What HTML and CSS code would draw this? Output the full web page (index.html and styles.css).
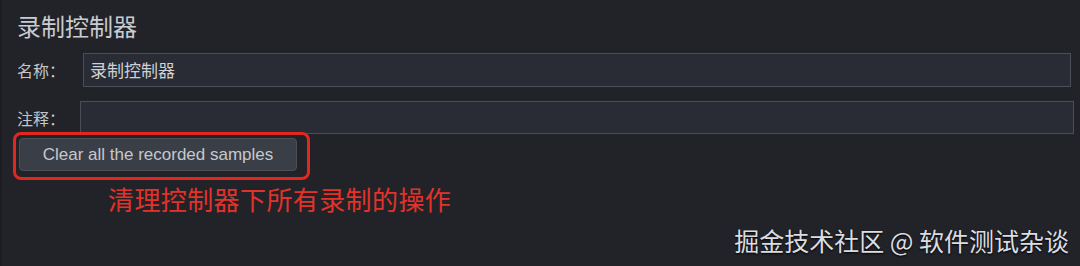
FILE: index.html
```html
<!DOCTYPE html>
<html lang="zh">
<head>
<meta charset="utf-8">
<title>录制控制器</title>
<link rel="stylesheet" href="styles.css">
</head>
<body>
<div class="panel">
  <h1 class="title">录制控制器</h1>
  <div class="row row-name">
    <label class="label">名称：</label>
    <div class="field">录制控制器</div>
  </div>
  <div class="row row-comment">
    <label class="label">注释：</label>
    <div class="field"></div>
  </div>
  <div class="btn-row">
    <div class="btn-wrap">
      <button class="btn">Clear all the recorded samples</button>
      <span class="highlight"></span>
    </div>
  </div>
  <p class="note">清理控制器下所有录制的操作</p>
  <div class="footer">
    <span class="watermark">掘金技术社区 @ 软件测试杂谈</span>
  </div>
</div>
</body>
</html>
```

FILE: styles.css
```css
html, body {
  margin: 0;
  padding: 0;
  background: #212329;
}
body {
  width: 1080px;
  height: 266px;
  overflow: hidden;
  font-family: "Liberation Sans", "Noto Sans CJK SC", sans-serif;
}
.panel {
  box-sizing: border-box;
  height: 266px;
  padding: 11px 0 0 17px;
  border-left: 2px solid #1b1d22;
  display: flex;
  flex-direction: column;
}
.title {
  margin: 0 0 0 -2px;
  font-family: "Noto Sans CJK SC", sans-serif;
  font-weight: 400;
  font-size: 24px;
  line-height: 30px;
  color: #c9cbcf;
}
.row {
  display: flex;
  align-items: center;
}
.row-name {
  margin-top: 12px;
}
.row-comment {
  margin-top: 14px;
}
.label {
  font-family: "Noto Sans CJK SC", sans-serif;
  font-size: 16px;
  color: #c4c6ca;
  margin-left: -2px;
}
.row-name .label {
  width: 66px;
}
.row-comment .label {
  width: 63px;
}
.field {
  box-sizing: border-box;
  height: 34px;
  background: #292c34;
  border: 1px solid #4b4e57;
  font-family: "Noto Sans CJK SC", sans-serif;
  font-size: 17px;
  line-height: 32px;
  color: #cfd1d5;
  padding-left: 6px;
}
.row-name .field {
  width: 988px;
}
.row-comment .field {
  width: 994px;
  height: 33px;
}
.btn-row {
  margin-top: 4px;
  display: flex;
}
.btn-wrap {
  position: relative;
}
.btn {
  display: block;
  box-sizing: border-box;
  width: 278px;
  height: 33px;
  background: #3a3e46;
  border: 1px solid #4b4f58;
  border-radius: 4px;
  color: #c6c8cc;
  font-family: "Liberation Sans", Arial, sans-serif;
  font-size: 17px;
  padding: 0;
  margin: 0;
}
.highlight {
  position: absolute;
  left: -6px;
  top: -6px;
  right: -13px;
  bottom: -9px;
  border: 3px solid #e3261f;
  border-radius: 8px;
  pointer-events: none;
}
.note {
  margin: 11px 0 0 89px;
  font-family: "Noto Sans CJK SC", sans-serif;
  font-size: 26px;
  line-height: 34px;
  color: #e2332a;
  letter-spacing: 0.4px;
}
.footer {
  display: flex;
  justify-content: flex-end;
  padding-right: 11px;
  margin-top: 8px;
}
.watermark {
  font-family: "Noto Sans CJK SC", sans-serif;
  font-size: 25px;
  line-height: 32px;
  color: #dcdde0;
  text-shadow: 0 1px 2px #000;
}
```
